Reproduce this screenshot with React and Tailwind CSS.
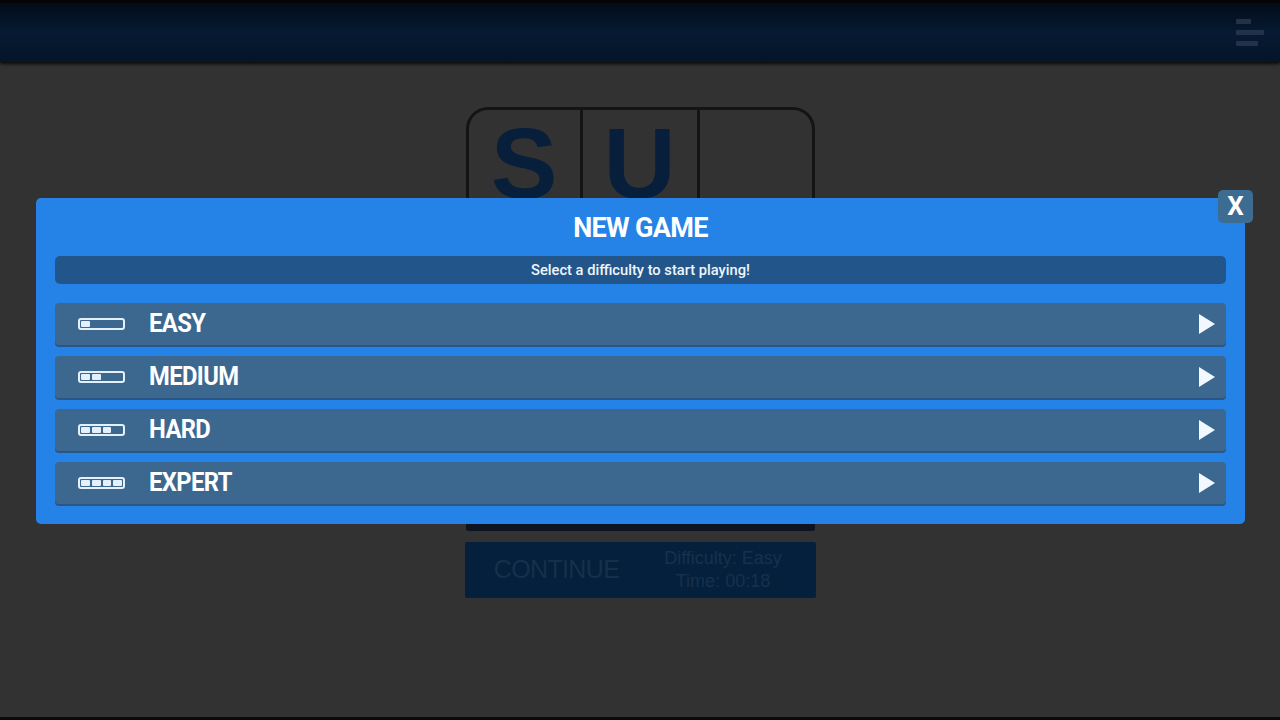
import React from "react";

const levels = [
    { name: "EASY", fill: 1 },
    { name: "MEDIUM", fill: 2 },
    { name: "HARD", fill: 3 },
    { name: "EXPERT", fill: 4 },
];

const LevelBar = ({ fill }) => (
    <div className="w-[47px] h-[12px] rounded-[3px] border-2 border-[#e4f0fb] flex items-center gap-[2px] px-[1px]">
        {[0, 1, 2, 3].map((i) => (
            <div key={i} className={`w-[9px] h-[6px] rounded-[1px] ${i < fill ? "bg-[#e4f0fb]" : "bg-transparent"}`} />
        ))}
    </div>
);

const PlayIcon = () => (
    <svg width="18" height="22" viewBox="0 0 18 22">
        <path d="M1 1 L17 11 L1 21 Z" fill="#f2f8ff" />
    </svg>
);

const App = () => {
    return (
        <div className="w-[1280px] h-[720px] relative overflow-hidden bg-[#323232] flex flex-col" style={{ fontFamily: "Roboto, 'Noto Sans', sans-serif" }}>
            {/* header */}
            <div className="h-[62px] shrink-0 bg-gradient-to-b from-[#030c18] via-[#061a33] to-[#051528] border-t-[3px] border-[#050505] shadow-[0_2px_3px_rgba(0,0,0,0.8)] flex items-center justify-end pr-[16px]">
                <div className="flex flex-col gap-[6px] w-[28px]">
                    <div className="h-[5px] w-[15px] bg-[#223248] rounded-[1px]" />
                    <div className="h-[5px] w-[28px] bg-[#223248] rounded-[1px]" />
                    <div className="h-[5px] w-[22px] bg-[#223248] rounded-[1px]" />
                </div>
            </div>

            {/* page behind overlay */}
            <div className="flex-1 flex flex-col items-center pt-[45px]">
                <div className="w-[349px] h-[424px] border-[3px] border-[#141414] border-b-[8px] border-b-[#0d1320] rounded-t-[22px] rounded-b-[3px] flex">
                    <div className="w-[114px] h-[92px] border-r-[3px] border-[#141414] flex items-center justify-center">
                        <span className="text-[100px] leading-none font-black text-[#081f3b] mt-[14px]" style={{ fontFamily: "'Liberation Sans', Arial, sans-serif" }}>S</span>
                    </div>
                    <div className="w-[117px] h-[92px] border-r-[3px] border-[#141414] flex items-center justify-center">
                        <span className="text-[100px] leading-none font-black text-[#081f3b] mt-[14px]" style={{ fontFamily: "'Liberation Sans', Arial, sans-serif" }}>U</span>
                    </div>
                    <div className="flex-1" />
                </div>
                <div className="mt-[11px] w-[351px] h-[56px] bg-[#04203d] rounded-[2px] flex items-center">
                    <div className="w-[176px] pl-[8px] text-center text-[25px] text-[#16304b] tracking-tight" style={{ fontFamily: "'Liberation Sans', Arial, sans-serif" }}>CONTINUE</div>
                    <div className="flex-1 flex flex-col items-center text-[18px] leading-[23px] text-[#17314c] pr-[10px]" style={{ fontFamily: "'Liberation Sans', Arial, sans-serif" }}>
                        <span>Difficulty: Easy</span>
                        <span>Time: 00:18</span>
                    </div>
                </div>
            </div>
            <div className="h-[3px] shrink-0 bg-[#0a0a0a]" />

            {/* modal */}
            <div className="absolute left-[36px] top-[198px] w-[1209px] h-[326px] bg-[#2583e7] rounded-[5px] px-[19px] flex flex-col">
                <div className="h-[58px] pt-[3px] flex items-center justify-center">
                    <h1 className="text-[27px] font-bold text-white tracking-tight">NEW GAME</h1>
                </div>
                <div className="h-[28px] rounded-[5px] bg-[#22558a] flex items-center justify-center text-[14.7px] font-medium text-[#eef5fc]">
                    Select a difficulty to start playing!
                </div>
                <div className="mt-[19px] flex flex-col gap-[11px]">
                    {levels.map((l) => (
                        <div key={l.name} className="h-[42px] rounded-[4px] bg-[#3c6890] shadow-[0_2px_0_#2b5584] flex items-center pl-[23px] pr-[10px]">
                            <LevelBar fill={l.fill} />
                            <span className="ml-[24px] text-[25px] font-bold text-white tracking-tight scale-x-95 origin-left">{l.name}</span>
                            <div className="flex-1" />
                            <PlayIcon />
                        </div>
                    ))}
                </div>
            </div>

            {/* close button */}
            <div className="absolute left-[1218px] top-[190px] w-[35px] h-[33px] rounded-[5px] bg-[#3d6c92] flex items-center justify-center text-[26px] font-bold text-white">
                X
            </div>
        </div>
    );
};

export default App;
